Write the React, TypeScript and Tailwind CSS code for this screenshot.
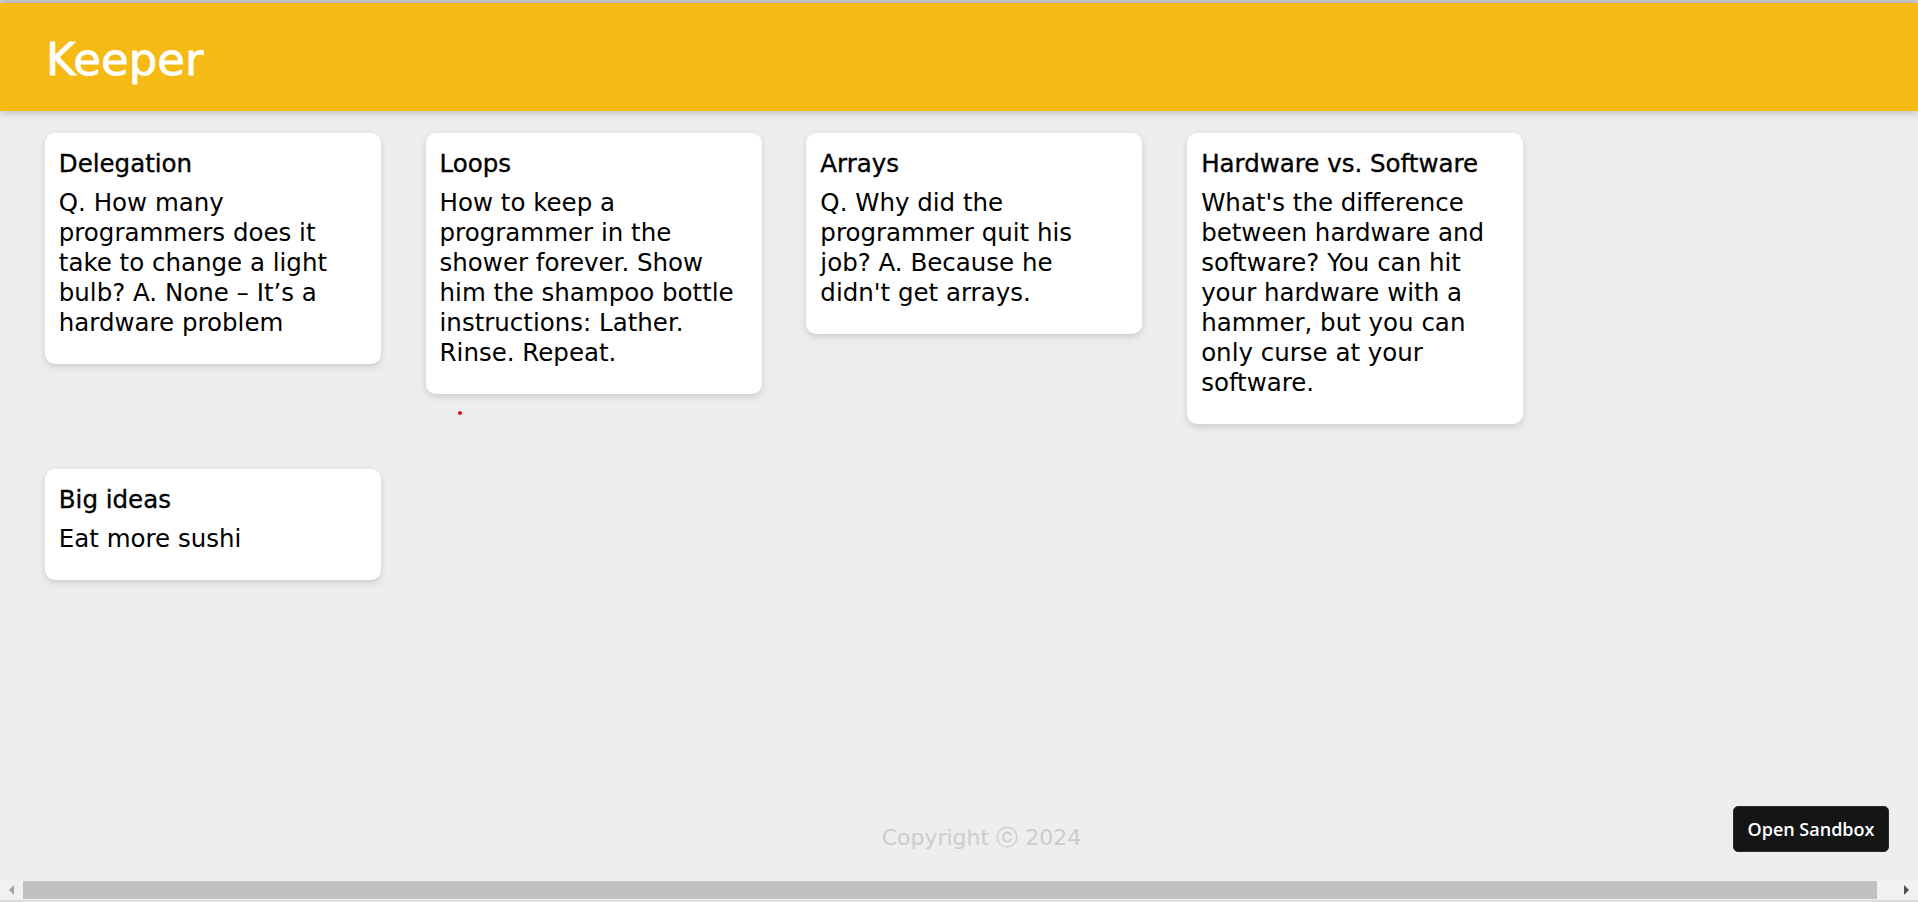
const notes = [
  {
    title: "Delegation",
    content:
      "Q. How many programmers does it take to change a light bulb? A. None – It’s a hardware problem",
  },
  {
    title: "Loops",
    content:
      "How to keep a programmer in the shower forever. Show him the shampoo bottle instructions: Lather. Rinse. Repeat.",
  },
  {
    title: "Arrays",
    content:
      "Q. Why did the programmer quit his job? A. Because he didn't get arrays.",
  },
  {
    title: "Hardware vs. Software",
    content:
      "What's the difference between hardware and software? You can hit your hardware with a hammer, but you can only curse at your software.",
  },
  {
    title: "Big ideas",
    content: "Eat more sushi",
  },
];

const Note = ({ title, content }: { title: string; content: string }) => {
  return (
    <div className="m-[22.4px] w-[336px] rounded-[10px] bg-white px-[14px] pt-[16px] pb-[26px] shadow-[0_3px_7px_#cccccc]">
      <h1 className="mb-[9px] text-[24.5px] leading-[30px] font-normal text-black [-webkit-text-stroke:0.35px_black]">
        {title}
      </h1>
      <p className="text-[24.5px] leading-[30px] text-black whitespace-pre-wrap break-words">
        {content}
      </p>
    </div>
  );
};

export default function App() {
  return (
    <div className="relative flex h-[902px] w-full flex-col overflow-hidden bg-[#eeeeee] font-['DejaVu_Sans',sans-serif]">
      <div className="h-[3px] shrink-0 bg-[#d6d6d6]" />

      <header className="relative z-10 flex h-[108px] shrink-0 items-center bg-[#f5ba13] pt-[5px] pl-[46px] shadow-[0_0_10px_0_rgba(0,0,0,0.3)]">
        <h1 className="text-[45px] leading-[60px] font-normal text-white [-webkit-text-stroke:0.8px_white]">
          Keeper
        </h1>
      </header>

      <main className="flex flex-1 flex-wrap content-start items-start px-[22.4px]">
        {notes.map((note, index) => (
          <Note key={index} title={note.title} content={note.content} />
        ))}
      </main>

      {/* stray dot in the capture */}
      <span className="absolute top-[411px] left-[458px] h-[4px] w-[4px] rounded-full bg-[#e01010]" />

      <footer className="h-[56px] shrink-0 pl-[44.8px] text-center">
        <p className="text-[22px] leading-[27px] text-[#cccccc]">Copyright ⓒ 2024</p>
      </footer>

      <button className="absolute top-[806px] left-[1733px] flex h-[46px] w-[156px] items-center justify-center rounded-[5px] border border-[#2c2c2c] bg-[#151515] font-['Open_Sans',sans-serif] text-[18px] font-semibold text-white">
        Open Sandbox
      </button>

      {/* horizontal scrollbar */}
      <div className="flex h-[22px] shrink-0 flex-col">
        <div className="flex h-[20px] items-stretch bg-[#f1f1f1]">
          <div className="flex w-[23px] items-center justify-center">
            <div className="h-0 w-0 border-y-[5px] border-r-[5px] border-y-transparent border-r-[#a3a3a3]" />
          </div>
          <div className="my-[1px] w-[1854px] bg-[#c1c1c1]" />
          <div className="flex-1" />
          <div className="flex w-[23px] items-center justify-center">
            <div className="h-0 w-0 border-y-[5px] border-l-[5px] border-y-transparent border-l-[#505050]" />
          </div>
        </div>
        <div className="h-[2px] bg-[#dcdcdc]" />
      </div>
    </div>
  );
}
